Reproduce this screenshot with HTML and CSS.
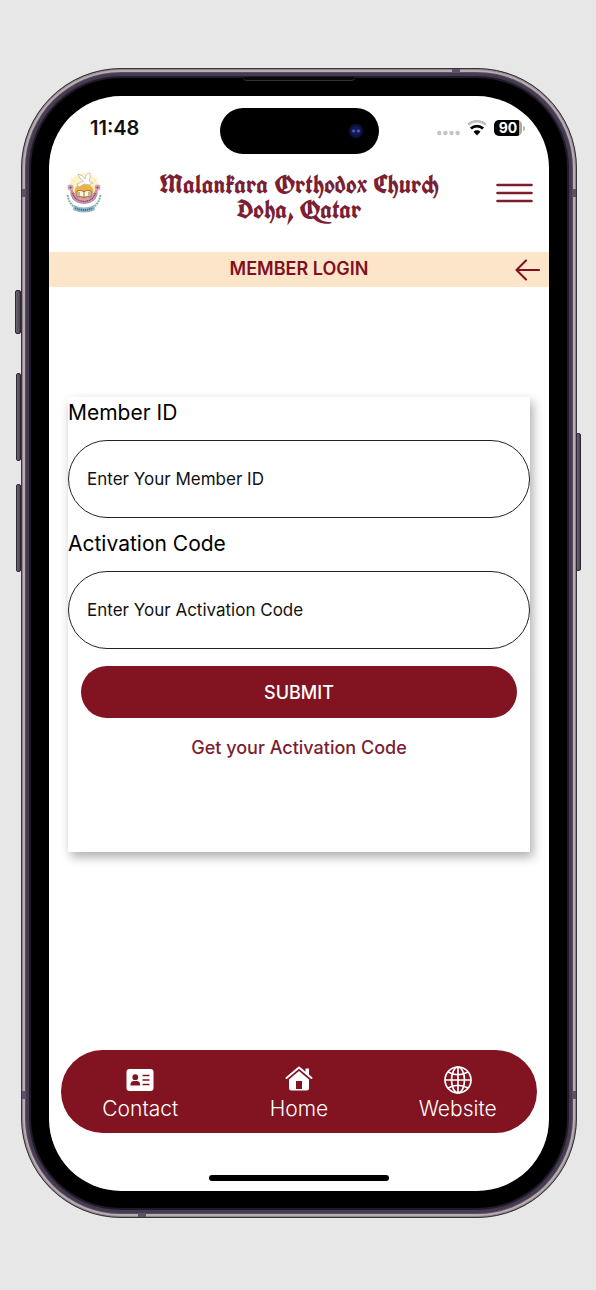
FILE: index.html
```html
<!DOCTYPE html>
<html lang="en">
<head>
<meta charset="utf-8">
<meta name="viewport" content="width=device-width, initial-scale=1">
<title>Member Login</title>
<link rel="stylesheet" href="styles.css">
</head>
<body>
<div class="phone">
  <span class="key key-mute"></span>
  <span class="key key-up"></span>
  <span class="key key-down"></span>
  <span class="key key-power"></span>
  <span class="band band-top"></span>
  <span class="band band-bottom"></span>
  <span class="band band-left upper"></span>
  <span class="band band-left lower"></span>
  <span class="band band-right upper"></span>
  <span class="band band-right lower"></span>
  <span class="speaker"></span>
  <div class="screen">
    <div class="status">
      <time class="clock">11:48</time>
      <div class="island"><span class="lens"></span></div>
      <div class="indicators">
        <svg class="cell" viewBox="0 0 23 16" aria-hidden="true"><g fill="#c4c4c6"><circle cx="2.3" cy="13" r="2.2"/><circle cx="8.4" cy="13" r="2.2"/><circle cx="14.5" cy="13" r="2.2"/><circle cx="20.6" cy="13" r="2.2"/></g></svg>
        <svg class="wifi" viewBox="0 0 20 16" aria-hidden="true"><path d="M1 4.600a13.500 13.500 0 0 1 18 0" fill="none" stroke="#bfbfc1" stroke-width="2.600"/><path d="M3.900 8.500a8.900 8.900 0 0 1 12.200 0" fill="none" stroke="#000" stroke-width="2.800"/><path d="M6.500 11.800a5 5 0 0 1 7 0L10 15.600z" fill="#000"/></svg>
        <span class="battery">90</span>
      </div>
    </div>
    <header class="header">
      <svg class="logo" viewBox="0 0 36 42" role="img" aria-label="Church emblem">
        <circle cx="18" cy="16" r="15" fill="#fff3c5"/>
        <path d="M5 6l3 4M31 6l-3 4M1 14h5M35 14h-5" stroke="#f7e6a8" stroke-width="1"/>
        <path d="M1.500 23Q3 32 10 36M34.500 23Q33 32 26 36" fill="none" stroke="#7cb7a1" stroke-width="2" stroke-dasharray="2 .7"/>
        <path d="M5 16Q3 31 18 31.500Q33 31 31 16Q27 26 18 26Q9 26 5 16z" fill="#d9a1bf" stroke="#9d5e80" stroke-width=".6"/>
        <path d="M6.500 21Q9 29 18 29.500Q27 29 29.500 21" fill="none" stroke="#85405f" stroke-width="1.500" stroke-dasharray="1.200 .6"/>
        <circle cx="4.500" cy="15.500" r="3" fill="#d5a1b9"/><circle cx="31.500" cy="15.500" r="3" fill="#d5a1b9"/>
        <circle cx="4.500" cy="15.500" r="1" fill="#694661"/><circle cx="31.500" cy="15.500" r="1" fill="#694661"/>
        <ellipse cx="18" cy="19" rx="9.500" ry="7.500" fill="#efb33d"/>
        <path d="M11 19q4-1.500 7 .5q3-2 7-.5v6q-4-1-7 .5q-3-1.500-7-.5z" fill="#fff4da" stroke="#745737" stroke-width=".8"/>
        <path d="M18 19v6M13 20v4M23 20v4" stroke="#745737" stroke-width=".8"/>
        <path d="M17.500 9Q13 7 12 2Q17 3 19 7Q20 1 24 1Q25 5 23 9L27 11Q23 14 18 12L13 15L11 12z" fill="#fff" stroke="#bcb8b2" stroke-width=".8"/>
        <path d="M8 33Q18 38 28 33L29 38Q18 43 7 38z" fill="#90b8ca"/>
        <path d="M9 36Q18 40 27 36" fill="none" stroke="#476e8d" stroke-width="1.800" stroke-dasharray="1.300 .7"/>
      </svg>
      <h1 class="title">Malankara Orthodox Church<br>Doha, Qatar</h1>
      <button class="icon-button" type="button" aria-label="Menu">
        <svg class="menu" viewBox="0 0 37 20" aria-hidden="true"><path d="M1.500 2h34M1.500 10h34M1.500 18h34" stroke="#7c1d31" stroke-width="2.600" stroke-linecap="round"/></svg>
      </button>
    </header>
    <div class="page-bar">
      <h2 class="page-title">MEMBER LOGIN</h2>
      <a class="back" href="#back" aria-label="Back"><svg class="arrow" viewBox="0 0 25 22" aria-hidden="true"><path d="M24 11H1.500M11 1.500L1.500 11L11 20.500" fill="none" stroke="#7f1022" stroke-width="2.100" stroke-linecap="round" stroke-linejoin="round"/></svg></a>
    </div>
    <form class="card">
      <label class="label" for="member">Member ID</label>
      <input class="field" id="member" type="text" placeholder="Enter Your Member ID">
      <label class="label" for="code">Activation Code</label>
      <input class="field" id="code" type="text" placeholder="Enter Your Activation Code">
      <button class="submit" type="button">SUBMIT</button>
      <a class="get-code" href="#code">Get your Activation Code</a>
    </form>
    <nav class="tabs">
      <a class="tab" href="#contact">
        <svg class="tab-icon" viewBox="0 0 28 28" aria-hidden="true"><rect x=".5" y="3" width="27" height="22" rx="3" fill="#fff"/><g fill="#821321"><circle cx="9.300" cy="11.200" r="2.900"/><path d="M4.500 19.500v-1q0-3.500 3.500-3.500h2.600q3.500 0 3.500 3.500v1z"/></g><path d="M16.500 9.500h7M16.500 14h7M16.500 18.500h7" stroke="#821321" stroke-width="1.300"/></svg>
        <span>Contact</span>
      </a>
      <a class="tab" href="#home">
        <svg class="tab-icon" viewBox="0 0 28 28" aria-hidden="true"><path d="M1.500 12L14 1.500L26.500 12" fill="none" stroke="#fff" stroke-width="2" stroke-linecap="round" stroke-linejoin="round"/><path d="M20.500 2.500H24v7l-3.500-3z" fill="#fff"/><path d="M14 5l10 8.400V22q0 2.500-2.500 2.500h-15Q4 24.500 4 22v-8.600z" fill="#fff"/><path d="M11 15h6v8h-6z" fill="#821321"/></svg>
        <span>Home</span>
      </a>
      <a class="tab" href="#website">
        <svg class="tab-icon" viewBox="0 0 28 28" aria-hidden="true"><g fill="none" stroke="#fff" stroke-width="1.700"><circle cx="14" cy="14" r="13"/><ellipse cx="14" cy="14" rx="6.500" ry="13"/><path d="M1 14h26M14 1v26M4 6q10 5.500 20 0M4 22q10-5.500 20 0"/></g></svg>
        <span>Website</span>
      </a>
    </nav>
    <div class="home-indicator"></div>
  </div>
</div>
</body>
</html>
```
FILE: styles.css
```css
* { box-sizing: border-box; }

body {
  margin: 0;
  min-height: 100vh;
  display: flex;
  padding: 68px 19px 72px 21px;
  background: #e7e7e7;
  color: #111;
  font-family: Inter, "Liberation Sans", sans-serif;
}

.phone {
  position: relative;
  flex: 1;
  display: flex;
  padding: 27px 27px 26px;
  border: 1px solid #39343b;
  border-radius: 100px;
  background: #000;
  box-shadow: inset 0 0 0 1px #8f858b, inset 0 0 0 3px #b8adb2, inset 0 0 0 4px #5b5060, inset 0 0 0 7px #453b50, inset 0 0 0 9px #211b29;
}

.key {
  position: absolute;
  width: 5px;
  border: 1px solid #2c2732;
  border-radius: 2px;
  background: linear-gradient(90deg, #6f6573, #4a4153);
}
.key-mute { left: -7px; top: 221px; height: 44px; width: 6px; }
.key-up { left: -6px; top: 304px; height: 88px; }
.key-down { left: -6px; top: 415px; height: 88px; }
.key-power { right: -5px; top: 364px; height: 138px; }

.band { position: absolute; background: #5d5166; }
.band-top { top: 0; right: 116px; width: 8px; height: 4px; }
.band-bottom { bottom: 0; left: 116px; width: 8px; height: 4px; }
.band-left { left: 0; width: 4px; height: 8px; }
.band-right { right: 0; width: 4px; height: 8px; }
.upper { top: 120px; }
.lower { bottom: 118px; }

.speaker {
  position: absolute;
  top: 8px;
  left: 50%;
  width: 112px;
  height: 4px;
  margin-left: -56px;
  border-bottom: 1px solid #333;
  border-radius: 0 0 4px 4px;
  background: #08080a;
}

.screen {
  flex: 1;
  display: flex;
  flex-direction: column;
  border-radius: 72px;
  background: #fff;
  overflow: hidden;
}

.status {
  display: grid;
  grid-template-columns: 1fr 159px 1fr;
  padding-top: 12px;
}
.clock {
  padding-left: 41px;
  font-size: 20px;
  font-weight: 600;
  line-height: 40px;
}
.island {
  display: flex;
  align-items: center;
  justify-content: flex-end;
  height: 46px;
  padding-right: 15px;
  border-radius: 23px;
  background: #000;
}
.lens {
  width: 16px;
  height: 16px;
  border-radius: 50%;
  background: radial-gradient(circle at 35% 50%, #4659b0 0 1px, transparent 2px), radial-gradient(circle at 65% 50%, #4659b0 0 1px, transparent 2px), radial-gradient(circle, #101b58 0 4px, #090b22 7px, #000 8px);
}
.indicators {
  display: flex;
  align-items: center;
  justify-content: flex-end;
  gap: 7px;
  height: 40px;
  padding-right: 24px;
}
.cell { width: 23px; height: 16px; }
.wifi { width: 20px; height: 16px; }
.battery {
  position: relative;
  width: 28px;
  margin-right: 3px;
  border-radius: 5px;
  background: linear-gradient(90deg, #000 90%, #aaa 90%);
  color: #fff;
  font-size: 14px;
  font-weight: 700;
  line-height: 16px;
  text-align: center;
}
.battery::after {
  content: "";
  position: absolute;
  top: 6px;
  right: -3px;
  width: 2px;
  height: 5px;
  border-radius: 0 2px 2px 0;
  background: #b5b5b5;
}

.header {
  display: flex;
  align-items: flex-start;
  justify-content: space-between;
  padding: 18px 16px 30px 17px;
}
.logo { width: 36px; height: 42px; }
.title {
  margin: 0;
  color: #7b2032;
  font-family: "Old English Text MT", "UnifrakturCook", "Liberation Serif", serif;
  font-size: 26px;
  font-weight: 700;
  line-height: 25px;
  text-align: center;
}
.icon-button {
  padding: 11px 0;
  border: 0;
  background: none;
  line-height: 0;
}
.menu { width: 37px; height: 20px; }

.page-bar {
  display: grid;
  grid-template-columns: 1fr auto 1fr;
  align-items: center;
  height: 35px;
  padding: 0 9px;
  background: #fde5ca;
}
.page-title {
  grid-column: 2;
  margin: 0;
  padding-bottom: 2px;
  color: #7f1022;
  font-size: 18px;
  font-weight: 600;
  line-height: 30px;
}
.back { justify-self: end; line-height: 0; }
.arrow { width: 25px; height: 22px; }

.card {
  display: flex;
  flex-direction: column;
  margin: 110px 19px 0;
  padding-bottom: 92px;
  background: #fff;
  box-shadow: 3px 5px 10px rgba(0, 0, 0, 0.32);
}
.label {
  margin-bottom: 11px;
  color: #000;
  font-size: 21px;
  line-height: 32px;
}
.field {
  width: 100%;
  height: 78px;
  padding: 0 18px;
  border: 1px solid #222;
  border-radius: 39px;
  background: #fff;
  color: #111;
  font: 17px Inter, "Liberation Sans", sans-serif;
}
.field::placeholder { color: #111; opacity: 1; }
.field + .label { margin-top: 10px; }
.submit {
  height: 52px;
  margin: 17px 13px 0;
  border: 0;
  border-radius: 26px;
  background: #821321;
  color: #fff;
  font: 500 18px Inter, "Liberation Sans", sans-serif;
}
.get-code {
  align-self: center;
  margin-top: 18px;
  color: #7b1e2f;
  font-size: 18px;
  font-weight: 500;
  line-height: 24px;
  text-decoration: none;
}

.tabs {
  display: grid;
  grid-template-columns: 1fr 1fr 1fr;
  margin: auto 12px 42px;
  padding: 16px 0 10px;
  border-radius: 42px;
  background: #821321;
}
.tab {
  display: flex;
  flex-direction: column;
  align-items: center;
  gap: 1px;
  color: #fff;
  font-size: 21px;
  font-weight: 300;
  line-height: 28px;
  text-decoration: none;
}
.tab-icon { width: 28px; height: 28px; }

.home-indicator {
  align-self: center;
  width: 36%;
  height: 6px;
  margin-bottom: 10px;
  border-radius: 3px;
  background: #000;
}
```
